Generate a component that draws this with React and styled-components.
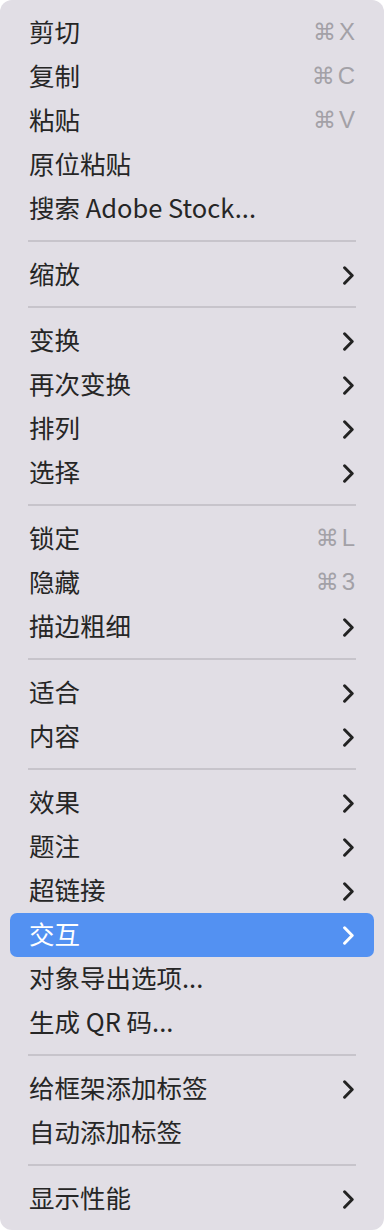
import React from "react";
import styled, { createGlobalStyle } from "styled-components";

const Global = createGlobalStyle`
  html, body { margin: 0; padding: 0; background: #ffffff; }
  body { font-family: "Noto Sans CJK SC", "Noto Sans", sans-serif; }
`;

const Menu = styled.div`
  width: 384px;
  height: 1230px;
  box-sizing: border-box;
  background: #e1dee5;
  border-radius: 12px;
  padding: 11px 0 9px;
  display: flex;
  flex-direction: column;
`;

const Row = styled.div`
  height: 44px;
  margin: 0 10px;
  padding: 0 20px 0 19px;
  border-radius: 7px;
  display: flex;
  align-items: center;
  justify-content: space-between;
  background: ${(p) => (p.$active ? "#5391f2" : "transparent")};
  color: ${(p) => (p.$active ? "#ffffff" : "#262626")};
`;

const Label = styled.span`
  font-size: 25.5px;
  line-height: 1;
  padding-bottom: 4px;
`;

const Shortcut = styled.span`
  display: flex;
  align-items: center;
  gap: 3px;
  color: #a3a1a7;
  font-family: "Liberation Sans", "Noto Sans", sans-serif;
  font-size: 24px;
  line-height: 1;
  padding-bottom: 2px;
  margin-right: -1px;
`;

const Cmd = styled.span`
  font-family: "DejaVu Sans", sans-serif;
  font-size: 23px;
`;

const Separator = styled.div`
  height: 2px;
  margin: 9px 28px 11px 28px;
  background: #c7c4cb;
`;

const Chevron = ({ color }) => (
  <svg width="11" height="19" viewBox="0 0 11 19" style={{ display: "block" }}>
    <polyline
      points="1.6,1.8 9.2,9.5 1.6,17.2"
      fill="none"
      stroke={color}
      strokeWidth="3"
      strokeLinecap="round"
      strokeLinejoin="round"
    />
  </svg>
);

const groups = [
  [
    { t: "剪切", k: "X" },
    { t: "复制", k: "C" },
    { t: "粘贴", k: "V" },
    { t: "原位粘贴" },
    { t: "搜索 Adobe Stock..." },
  ],
  [{ t: "缩放", sub: true }],
  [
    { t: "变换", sub: true },
    { t: "再次变换", sub: true },
    { t: "排列", sub: true },
    { t: "选择", sub: true },
  ],
  [
    { t: "锁定", k: "L" },
    { t: "隐藏", k: "3" },
    { t: "描边粗细", sub: true },
  ],
  [
    { t: "适合", sub: true },
    { t: "内容", sub: true },
  ],
  [
    { t: "效果", sub: true },
    { t: "题注", sub: true },
    { t: "超链接", sub: true },
    { t: "交互", sub: true, active: true },
    { t: "对象导出选项..." },
    { t: "生成 QR 码..." },
  ],
  [
    { t: "给框架添加标签", sub: true },
    { t: "自动添加标签" },
  ],
  [{ t: "显示性能", sub: true }],
];

export default function App() {
  return (
    <>
      <Global />
      <Menu>
        {groups.map((g, gi) => (
          <React.Fragment key={gi}>
            {gi > 0 && <Separator />}
            {g.map((it) => (
              <Row key={it.t} $active={it.active}>
                <Label>{it.t}</Label>
                {it.k && (
                  <Shortcut>
                    <Cmd>⌘</Cmd>
                    {it.k}
                  </Shortcut>
                )}
                {it.sub && <Chevron color={it.active ? "#ffffff" : "#222222"} />}
              </Row>
            ))}
          </React.Fragment>
        ))}
      </Menu>
    </>
  );
}
